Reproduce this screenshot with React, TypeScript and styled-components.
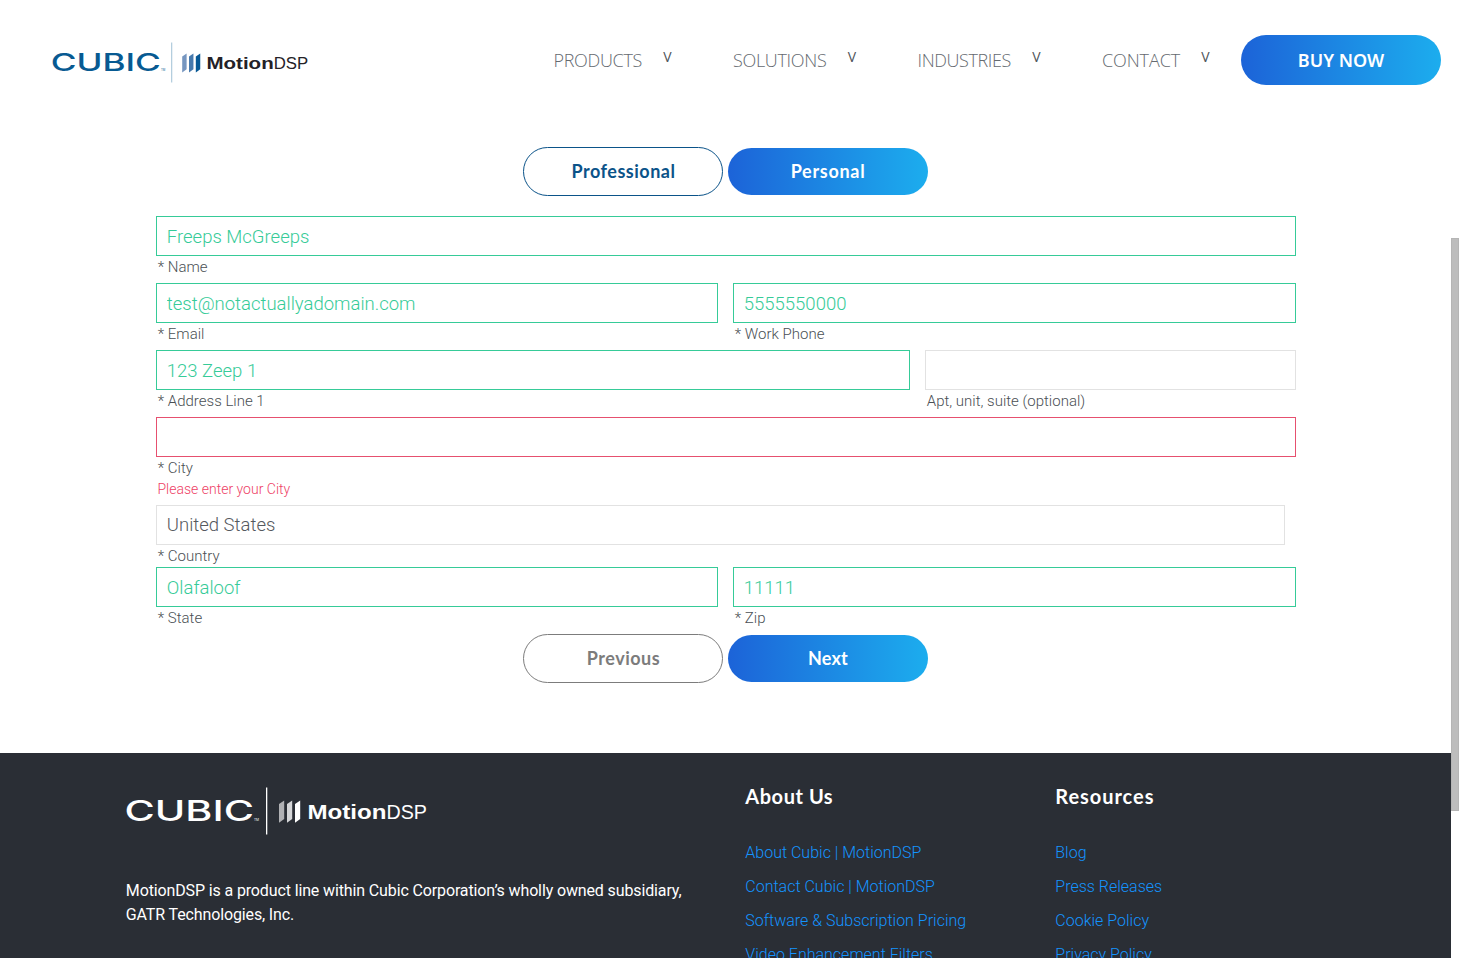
import React from "react";
import styled, { createGlobalStyle, css } from "styled-components";

const gradient = "linear-gradient(90deg, #1c63d8 0%, #1cadee 100%)";

const GlobalStyle = createGlobalStyle`
  * { box-sizing: border-box; }
  body { margin: 0; background: #fff; overflow: hidden; font-family: Roboto, sans-serif; }
`;

const Window = styled.div`
  display: flex;
  width: 1459px;
  height: 958px;
  overflow: hidden;
`;

const Page = styled.div`
  display: flex;
  flex-direction: column;
  flex: 1;
  min-width: 0;
  height: 958px;
  overflow: hidden;
`;

const ScrollTrack = styled.div`
  flex: none;
  width: 8px;
  padding-top: 238px;
  background: #fff;
`;

const ScrollThumb = styled.div`
  height: 573px;
  border: 1px solid #b5b5b5;
  background: #bdbdbd;
`;

const Header = styled.header`
  display: flex;
  flex: none;
  align-items: center;
  justify-content: space-between;
  height: 120px;
  padding: 0 10px 0 52px;
`;

const HeaderLogo = styled.div`
  width: 257px;
  height: 41px;
  margin-top: 5px;
`;

const Nav = styled.nav`
  display: flex;
  align-items: center;
`;

const NavItem = styled.a<{ $gap?: number }>`
  display: flex;
  align-items: center;
  margin-right: ${({ $gap = 61 }) => $gap}px;
  color: #656a70;
  font: 300 18px/24px "Open Sans", sans-serif;
`;

const NavLabel = styled.span<{ $width: number; $spacing: number }>`
  width: ${({ $width }) => $width}px;
  letter-spacing: ${({ $spacing }) => $spacing}px;
  white-space: nowrap;
`;

const NavCaret = styled.span`
  width: 9px;
  margin: -7px 0 0 21px;
  color: #50555b;
  font: 400 14px/20px "Open Sans", sans-serif;
  text-align: center;
`;

const pill = css`
  display: flex;
  align-items: center;
  justify-content: center;
  width: 200px;
  padding: 0;
  border: 0;
  border-radius: 25px;
`;

const BuyButton = styled.button`
  ${pill}
  height: 50px;
  background: ${gradient};
  color: #fff;
  font: 600 18px/24px "Noto Sans", sans-serif;
`;

const PillRow = styled.div`
  display: flex;
  align-items: center;
  gap: 5px;
  height: 49px;
  padding-left: 367px;
`;

const SolidPill = styled.button<{ $spacing: number }>`
  ${pill}
  height: 47px;
  padding-bottom: 2px;
  background: ${gradient};
  color: #fff;
  font: 700 18px/24px Lato, sans-serif;
  letter-spacing: ${({ $spacing }) => $spacing}px;
`;

const OutlinePill = styled.button<{ $color: string }>`
  ${pill}
  height: 49px;
  padding: 0 0 2px 1px;
  border: 1px solid ${({ $color }) => $color};
  background: #fff;
  color: ${({ $color }) => $color};
  font: 700 18px/24px Lato, sans-serif;
  letter-spacing: 0.5px;
`;

const Form = styled.form`
  display: flex;
  flex: none;
  flex-direction: column;
  width: 1140px;
  height: 633px;
  margin-left: 156px;
  padding-top: 27px;
`;

const Fields = styled.div`
  padding-top: 20px;
`;

const FieldRow = styled.div<{ $columns?: string; $height?: number }>`
  display: grid;
  grid-template-columns: ${({ $columns = "1fr" }) => $columns};
  column-gap: 15px;
  height: ${({ $height = 67 }) => $height}px;
`;

type Status = "valid" | "invalid" | "idle";
const borders: Record<Status, string> = { valid: "#36cb98", invalid: "#e6506f", idle: "#e2e2e2" };

const Input = styled.input<{ $status: Status; $width?: string }>`
  display: block;
  width: ${({ $width = "100%" }) => $width};
  height: 40px;
  padding: ${({ $status }) => ($status === "valid" ? "2px" : "0")} 10px 0 9.8px;
  border: 1px solid ${({ $status }) => borders[$status]};
  border-radius: 0;
  outline: 0;
  background: #fff;
  color: ${({ $status }) => ($status === "valid" ? "#36cb98" : "#55595e")};
  font: 300 18.5px/24px Roboto, sans-serif;
`;

const Label = styled.label`
  display: block;
  padding-left: 1.8px;
  color: #4a4f54;
  font: 300 15px/22px Roboto, sans-serif;
`;

const ErrorText = styled.div`
  padding-left: 1.5px;
  color: #ee4165;
  font: 300 14px/20px Roboto, sans-serif;
`;

const Footer = styled.footer`
  display: grid;
  flex: 1;
  grid-template-columns: 619.5px 310px 1fr;
  min-height: 0;
  padding-left: 125.8px;
  overflow: hidden;
  background: #2a2e35;
`;

const About = styled.div`
  padding-top: 34px;
`;

const FooterLogo = styled.div`
  width: 302px;
  height: 48px;
`;

const Blurb = styled.p`
  margin: 44px 0 0;
  color: #fff;
  font-size: 16px;
  line-height: 24px;
  letter-spacing: -0.13px;
`;

const LinkColumn = styled.div`
  display: flex;
  flex-direction: column;
  padding-top: 31px;
`;

const ColumnTitle = styled.h4<{ $spacing: number }>`
  margin: 0 0 28px;
  color: #fff;
  font: 700 20px/24px Lato, sans-serif;
  letter-spacing: ${({ $spacing }) => $spacing}px;
`;

const FooterLink = styled.a`
  color: #1494ff;
  font-weight: 300;
  font-size: 16px;
  line-height: 34px;
  white-space: nowrap;
`;

interface LogoColors {
  cubic: string;
  divider: string;
  bars: [string, string, string];
  name: string;
}

const Logo = ({ cubic, divider, bars, name }: LogoColors) => (
  <svg width="100%" height="100%" viewBox="0 0 302 48" aria-label="Cubic MotionDSP">
    <g transform="translate(-1.5 33.8) scale(1.55 1)">
      <text x="0" y="0" fill={cubic} fontFamily="Inter, sans-serif" fontWeight="500" fontSize="28" textLength="83.5" lengthAdjust="spacingAndGlyphs">CUBIC</text>
    </g>
    <text x="128" y="34" fill={cubic} fontFamily="Inter, sans-serif" fontSize="4" textLength="5" lengthAdjust="spacingAndGlyphs">TM</text>
    <rect x="140" y="0.5" width="1.3" height="47" fill={divider} />
    <path d="M153 17 L158.2 13.5 V32 L153 35.8 Z" fill={bars[0]} />
    <path d="M161 17 L166.2 13.5 V32 L161 35.8 Z" fill={bars[1]} />
    <path d="M169 17 L174.2 13.5 V32 L169 35.8 Z" fill={bars[2]} />
    <text x="181.5" y="32" fill={name} fontFamily="'Liberation Sans', sans-serif" fontWeight="700" fontSize="19.5" textLength="79" lengthAdjust="spacingAndGlyphs">Motion</text>
    <text x="260.5" y="32" fill={name} fontFamily="'Liberation Sans', sans-serif" fontSize="19.5" textLength="40.5" lengthAdjust="spacingAndGlyphs">DSP</text>
  </svg>
);

const navItems = [
  { label: "PRODUCTS", width: 88.5, spacing: -0.32 },
  { label: "SOLUTIONS", width: 93.5, spacing: -0.32 },
  { label: "INDUSTRIES", width: 93.5, spacing: -0.4 },
  { label: "CONTACT", width: 78, spacing: -0.1, gap: 31 },
];

interface FieldProps {
  label: string;
  value?: string;
  status?: Status;
  width?: string;
  error?: string;
}

const Field = ({ label, value = "", status = "valid", width, error }: FieldProps) => (
  <div>
    <Input $status={status} $width={width} defaultValue={value} aria-label={label} />
    <Label>{label}</Label>
    {error && <ErrorText>{error}</ErrorText>}
  </div>
);

const columns = [
  { title: "About Us", spacing: 0.55, links: ["About Cubic | MotionDSP", "Contact Cubic | MotionDSP", "Software & Subscription Pricing", "Video Enhancement Filters"] },
  { title: "Resources", spacing: 0.95, links: ["Blog", "Press Releases", "Cookie Policy", "Privacy Policy"] },
];

export default function App() {
  return (
    <Window>
      <GlobalStyle />
      <Page>
        <Header>
          <HeaderLogo>
            <Logo cubic="#075a92" divider="#a9c7d9" bars={["#7696c0", "#4779ad", "#075895"]} name="#242127" />
          </HeaderLogo>
          <Nav>
            {navItems.map(({ label, width, spacing, gap }) => (
              <NavItem key={label} $gap={gap}>
                <NavLabel $width={width} $spacing={spacing}>{label}</NavLabel>
                <NavCaret>V</NavCaret>
              </NavItem>
            ))}
            <BuyButton type="button">BUY NOW</BuyButton>
          </Nav>
        </Header>
        <Form>
          <PillRow>
            <OutlinePill type="button" $color="#0b5389">Professional</OutlinePill>
            <SolidPill type="button" $spacing={0.7}>Personal</SolidPill>
          </PillRow>
          <Fields>
            <FieldRow>
              <Field label="* Name" value="Freeps McGreeps" />
            </FieldRow>
            <FieldRow $columns="562px 563px">
              <Field label="* Email" value="test@notactuallyadomain.com" />
              <Field label="* Work Phone" value="5555550000" />
            </FieldRow>
            <FieldRow $columns="754px 371px">
              <Field label="* Address Line 1" value="123 Zeep 1" />
              <Field label="Apt, unit, suite (optional)" status="idle" />
            </FieldRow>
            <FieldRow $height={88}>
              <Field label="* City" status="invalid" error="Please enter your City" />
            </FieldRow>
            <FieldRow $height={62}>
              <Field label="* Country" value="United States" status="idle" width="1129px" />
            </FieldRow>
            <FieldRow $columns="562px 563px">
              <Field label="* State" value="Olafaloof" />
              <Field label="* Zip" value="11111" />
            </FieldRow>
          </Fields>
          <PillRow>
            <OutlinePill type="button" $color="#7c7c7c">Previous</OutlinePill>
            <SolidPill type="button" $spacing={0.25}>Next</SolidPill>
          </PillRow>
        </Form>
        <Footer>
          <About>
            <FooterLogo>
              <Logo cubic="#fff" divider="#fff" bars={["#b0b1b4", "#d5d6d8", "#fff"]} name="#fff" />
            </FooterLogo>
            <Blurb>
              MotionDSP is a product line within Cubic Corporation’s wholly owned subsidiary,
              <br />
              GATR Technologies, Inc.
            </Blurb>
          </About>
          {columns.map(({ title, spacing, links }) => (
            <LinkColumn key={title}>
              <ColumnTitle $spacing={spacing}>{title}</ColumnTitle>
              {links.map((link) => (
                <FooterLink key={link}>{link}</FooterLink>
              ))}
            </LinkColumn>
          ))}
        </Footer>
      </Page>
      <ScrollTrack>
        <ScrollThumb />
      </ScrollTrack>
    </Window>
  );
}
